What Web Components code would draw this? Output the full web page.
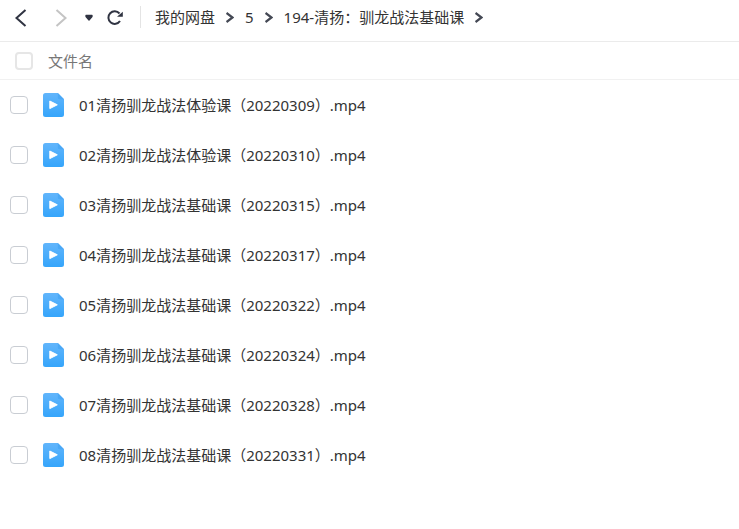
<!DOCTYPE html>
<html lang="zh-CN">
<head>
<meta charset="utf-8">
<title>我的网盘</title>
<style>
    body {
        margin: 0;
        background: #fff;
        color: #333;
        font: 15px/20px "Noto Sans", "Noto Sans CJK SC", sans-serif;
    }
</style>
</head>
<body>
<disk-toolbar>
    <disk-crumb>我的网盘</disk-crumb>
    <disk-crumb>5</disk-crumb>
    <disk-crumb>194-清扬：驯龙战法基础课</disk-crumb>
</disk-toolbar>
<file-list>
    <file-row name="01清扬驯龙战法体验课（20220309）.mp4"></file-row>
    <file-row name="02清扬驯龙战法体验课（20220310）.mp4"></file-row>
    <file-row name="03清扬驯龙战法基础课（20220315）.mp4"></file-row>
    <file-row name="04清扬驯龙战法基础课（20220317）.mp4"></file-row>
    <file-row name="05清扬驯龙战法基础课（20220322）.mp4"></file-row>
    <file-row name="06清扬驯龙战法基础课（20220324）.mp4"></file-row>
    <file-row name="07清扬驯龙战法基础课（20220328）.mp4"></file-row>
    <file-row name="08清扬驯龙战法基础课（20220331）.mp4"></file-row>
</file-list>

<script>
const checkboxStyle = `
    input {
        appearance: none;
        flex: none;
        box-sizing: border-box;
        width: 18px;
        height: 18px;
        margin: 0;
        border: 1px solid #c9cdd3;
        border-radius: 4px;
        background: #fff;
    }
    input:checked {
        background: #45a5fa;
    }
`

class DiskToolbar extends HTMLElement {

    constructor() {
        super()
        const shadow = this.attachShadow({ mode: 'open' })
        shadow.innerHTML = `
            <style>
                :host {
                    display: flex;
                    align-items: center;
                    height: 33px;
                    padding: 0 9px 8px;
                    border-bottom: 1px solid #ebebeb;
                }
                .buttons {
                    display: flex;
                    align-items: center;
                    gap: 8px;
                }
                button {
                    display: flex;
                    align-items: center;
                    justify-content: center;
                    width: 24px;
                    height: 24px;
                    padding: 0;
                    border: 0;
                    background: none;
                    color: #303442;
                }
                .forward {
                    margin-left: 8px;
                }
                .history {
                    width: 16px;
                }
                .refresh {
                    width: 20px;
                }
                .forward:disabled {
                    color: #c4c4c4;
                }
                svg {
                    display: block;
                    fill: none;
                    stroke: currentColor;
                    stroke-width: 2;
                }
                nav {
                    display: flex;
                    align-items: center;
                    height: 22px;
                    margin-left: 15px;
                    padding-left: 14px;
                    border-left: 1px solid #e4e4e4;
                    white-space: nowrap;
                }
            </style>
            <div class="buttons">
                <button class="back" aria-label="后退">
                    <svg width="20" height="20" viewBox="0 0 20 20"><path d="M14.5 3 5.5 11 14.5 19"/></svg>
                </button>
                <button class="forward" aria-label="前进" disabled>
                    <svg width="20" height="20" viewBox="0 0 20 20"><path d="M5.5 3 14.5 11 5.5 19"/></svg>
                </button>
                <button class="history" aria-label="历史">
                    <svg width="10" height="10" viewBox="0 0 10 10"><path d="M2 3.5H8V4.5L5 8 2 4.500Z" fill="currentColor" stroke-width="1.3" stroke-linejoin="round"/></svg>
                </button>
                <button class="refresh" aria-label="刷新">
                    <svg width="20" height="20" viewBox="0 0 20 20"><path d="M14.5 6.5A6.300 6.300 0 1 0 15 14"/><path d="M17.800 4.800V9.800H12Z" fill="currentColor" stroke="none"/></svg>
                </button>
            </div>
            <nav aria-label="路径"><slot></slot></nav>
        `
    }
}

class DiskCrumb extends HTMLElement {

    constructor() {
        super()
        const shadow = this.attachShadow({ mode: 'open' })
        shadow.innerHTML = `
            <style>
                :host {
                    display: flex;
                    align-items: center;
                    gap: 11px;
                    margin-right: 11px;
                }
                a {
                    color: inherit;
                    text-decoration: none;
                }
                svg {
                    display: block;
                    fill: none;
                    stroke: #444854;
                    stroke-width: 2.3;
                }
            </style>
            <a href="#"><slot></slot></a>
            <svg width="8" height="12" viewBox="0 0 8 12"><path d="M0.5 2 6.5 6.5 0.5 11"/></svg>
        `
    }
}

class FileList extends HTMLElement {

    constructor() {
        super()
        const shadow = this.attachShadow({ mode: 'open' })
        shadow.innerHTML = `
            <style>
                ${checkboxStyle}
                :host {
                    display: block;
                }
                .head {
                    display: flex;
                    align-items: center;
                    gap: 15px;
                    height: 37px;
                    padding-left: 15px;
                    border-bottom: 1px solid #f1f1f1;
                    color: #777;
                }
                .head input {
                    border: 2px solid #e6e6e6;
                }
            </style>
            <div class="head">
                <input type="checkbox" id="all" aria-label="全选">
                <label for="all">文件名</label>
            </div>
            <slot></slot>
        `
    }
}

class FileRow extends HTMLElement {

    constructor() {
        super()
        const name = this.getAttribute('name')
        const shadow = this.attachShadow({ mode: 'open' })
        shadow.innerHTML = `
            <style>
                ${checkboxStyle}
                :host {
                    display: flex;
                    align-items: center;
                    gap: 15px;
                    height: 50px;
                    padding-left: 10px;
                }
                label {
                    display: flex;
                    align-items: center;
                    gap: 15px;
                    white-space: nowrap;
                }
                svg {
                    display: block;
                    flex: none;
                }
            </style>
            <input type="checkbox" id="pick">
            <label for="pick">
                <svg width="21" height="24" viewBox="0 0 21 24">
                    <defs>
                        <linearGradient id="page" x1="0" y1="0" x2="0" y2="1">
                            <stop offset="0" stop-color="#62b5fb"/>
                            <stop offset="1" stop-color="#35a5fb"/>
                        </linearGradient>
                    </defs>
                    <path d="M2.5 0H14.8L21 6.2V21.5A2.5 2.5 0 0 1 18.5 24H2.5A2.5 2.5 0 0 1 0 21.5V2.5A2.5 2.5 0 0 1 2.5 0Z" fill="url(#page)"/>
                    <path d="M14.8 0 21 6.2H16.5A1.7 1.7 0 0 1 14.8 4.5Z" fill="#4aa8f6"/>
                    <path d="M6.8 8 14.3 11.8 6.8 15.6Z" fill="#fff" stroke="#fff" stroke-linejoin="round"/>
                </svg>
                <span>${name}</span>
            </label>
        `
    }
}

customElements.define('disk-toolbar', DiskToolbar)
customElements.define('disk-crumb', DiskCrumb)
customElements.define('file-list', FileList)
customElements.define('file-row', FileRow)
</script>
</body>
</html>
